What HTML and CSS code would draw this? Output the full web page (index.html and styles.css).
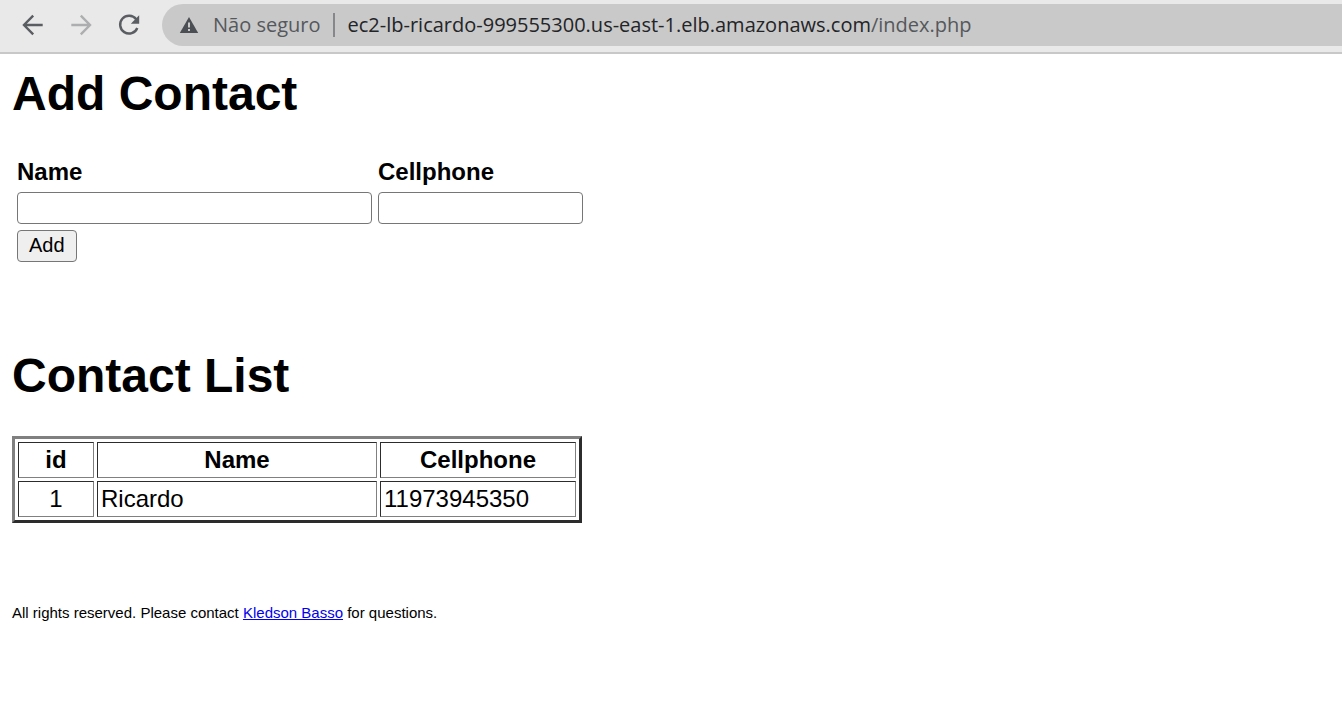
FILE: index.html
```html
<!DOCTYPE html>
<html lang="en">
<head>
<meta charset="utf-8">
<meta name="viewport" content="width=device-width, initial-scale=1">
<title>Contacts</title>
<link rel="stylesheet" href="styles.css">
</head>
<body>
<header class="toolbar">
  <nav class="nav" aria-label="Browser">
    <button class="nav-button" type="button" aria-label="Back">
      <svg width="24" height="24" viewBox="0 0 24 24" fill="none" stroke="currentColor" stroke-width="2.4"><path d="M21.700 12H3.200M12.200 2.700L3 12l9.200 9.300"/></svg>
    </button>
    <button class="nav-button nav-button-off" type="button" aria-label="Forward">
      <svg width="24" height="24" viewBox="0 0 24 24" fill="none" stroke="currentColor" stroke-width="2.4"><path d="M2.300 12h18.500M11.800 2.700L21 12l-9.200 9.300"/></svg>
    </button>
    <button class="nav-button" type="button" aria-label="Reload">
      <svg width="24" height="24" viewBox="0 0 24 24" fill="none" stroke="currentColor" stroke-width="2.400"><path d="M19.200 6.300A8.900 8.900 0 1 0 20.300 15"/><path d="M22.200 2.300v8.400h-8.400z" fill="currentColor" stroke="none"/></svg>
    </button>
  </nav>
  <div class="address">
    <svg class="warning" width="20" height="18" viewBox="0 0 20 18"><path d="M10 1L19.200 17H.8z" fill="#4b4e52"/><path d="M9 6.500h2v5H9zM9 13h2v2H9z" fill="#c9c9c9"/></svg>
    <span class="status">Não seguro</span>
    <span class="divider"></span>
    <span class="url"><span class="host">ec2-lb-ricardo-999555300.us-east-1.elb.amazonaws.com</span>/index.php</span>
  </div>
</header>
<main class="page">
  <h1 class="title">Add Contact</h1>
  <form class="form">
    <label class="label" for="name">Name</label>
    <label class="label" for="cellphone">Cellphone</label>
    <input class="field" id="name" type="text">
    <input class="field" id="cellphone" type="text">
    <button class="add" type="button">Add</button>
  </form>
  <h1 class="title">Contact List</h1>
  <table class="contacts">
    <thead>
      <tr><th class="col-id">id</th><th class="col-name">Name</th><th class="col-phone">Cellphone</th></tr>
    </thead>
    <tbody>
      <tr><td class="center">1</td><td>Ricardo</td><td>11973945350</td></tr>
    </tbody>
  </table>
  <footer class="footer">All rights reserved. Please contact <a class="link" href="#">Kledson Basso</a> for questions.</footer>
</main>
</body>
</html>
```
FILE: styles.css
```css
* { box-sizing: border-box; }
body {
  margin: 0;
  background: #fff;
  color: #000;
  font-family: "Liberation Sans", Arial, sans-serif;
  font-size: 24px;
  line-height: 30px;
}
.toolbar {
  display: flex;
  align-items: center;
  gap: 21px;
  padding: 4px 0 6px 21px;
  background: #e9e9e9;
  border-bottom: 2px solid #c8c8c8;
}
.nav { display: flex; gap: 24px; }
.nav-button {
  display: flex;
  padding: 0;
  border: 0;
  background: none;
  color: #5a5d61;
}
.nav-button-off { color: #adaeaf; }
.address {
  display: flex;
  flex: 1;
  align-items: center;
  height: 42px;
  padding-left: 17px;
  border-radius: 21px 0 0 21px;
  background: #c9c9c9;
  color: #55585c;
  font-family: "Open Sans", "Noto Sans", sans-serif;
  font-size: 20px;
  white-space: nowrap;
}
.status { margin-left: 14px; }
.divider {
  width: 2px;
  height: 24px;
  margin: 0 13px 0 12px;
  background: #85878a;
}
.host { color: #232427; }
.page { padding: 12px; }
.title {
  margin: 0;
  font-size: 48px;
  font-weight: bold;
  line-height: 56px;
}
.form {
  display: grid;
  grid-template-columns: 355px 205px;
  gap: 6px;
  margin: 35px 0 86px 5px;
}
.label {
  font-weight: bold;
  line-height: 29px;
}
.field {
  width: 100%;
  height: 32px;
  padding: 2px 4px;
  border: 1px solid #767676;
  border-radius: 4px;
  background: #fff;
  font: inherit;
}
.add {
  justify-self: start;
  height: 32px;
  padding: 0 11px 2px;
  border: 1px solid #767676;
  border-radius: 4px;
  background: #efefef;
  color: #000;
  font-family: inherit;
  font-size: 20px;
}
.contacts {
  margin-top: 32px;
  border: 3px solid;
  border-color: #808080 #2c2c2c #2c2c2c #808080;
  border-collapse: separate;
  border-spacing: 3px;
}
.contacts th, .contacts td {
  padding: 2px 3px;
  border: 1px solid;
  border-color: #2c2c2c #808080 #808080 #2c2c2c;
}
.col-id { width: 76px; }
.col-name { width: 280px; }
.col-phone { width: 196px; }
.center { text-align: center; }
.footer {
  margin-top: 80px;
  font-size: 15px;
  line-height: 20px;
}
.link { color: #0000ee; }
```
